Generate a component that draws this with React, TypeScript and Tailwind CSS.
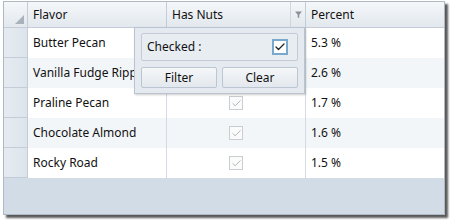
import { Check } from 'lucide-react'

const ROWS = [
  { flavor: 'Butter Pecan', percent: '5.3 %' },
  { flavor: 'Vanilla Fudge Ripple', percent: '2.6 %' },
  { flavor: 'Praline Pecan', percent: '1.7 %' },
  { flavor: 'Chocolate Almond', percent: '1.6 %' },
  { flavor: 'Rocky Road', percent: '1.5 %' },
]

function DisabledCheck() {
  return (
    <div className="w-[14px] h-[14px] border border-[#c8cdd2] bg-[#fbfbfb] flex items-center justify-center">
      <Check size={11} strokeWidth={2} className="text-[#a8acb0]" />
    </div>
  )
}

function FilterPopup() {
  return (
    <div className="absolute left-[130px] top-[25px] w-[171px] h-[67px] bg-[#e4eaf0] border border-[#b9c4cf] shadow-[1px_1px_2px_rgba(0,0,0,0.2)] px-[6px] pt-[5px] flex flex-col gap-[6px]">
      <div className="h-[28px] rounded-[2px] border border-[#c3ccd6] bg-[#e8edf2] flex items-center justify-between pl-[5px] pr-[9px]">
        <span>Checked :</span>
        <div className="w-[16px] h-[16px] border-2 border-[#7aa7cc] bg-white flex items-center justify-center">
          <Check size={12} strokeWidth={2.5} className="text-[#222]" />
        </div>
      </div>
      <div className="flex gap-[5px]">
        <button className="flex-1 h-[21px] rounded-[2px] border border-[#bcc6d0] bg-gradient-to-b from-[#f5f7f9] to-[#e3e8ee] leading-none">
          Filter
        </button>
        <button className="flex-1 h-[21px] rounded-[2px] border border-[#bcc6d0] bg-gradient-to-b from-[#f5f7f9] to-[#e3e8ee] leading-none">
          Clear
        </button>
      </div>
    </div>
  )
}

export default function App() {
  return (
    <div className="w-[453px] h-[222px] bg-white pl-[3px] pt-[1px] font-['Noto_Sans',sans-serif] text-[12px] text-[#111]">
      <div className="relative w-[442px] h-[214px] border border-[#aeb9c5] bg-[#d2dce6] shadow-[3px_3px_2px_rgba(0,0,0,0.65)] flex flex-col overflow-hidden">
        <div className="flex h-[26px] bg-gradient-to-b from-[#f5f7f9] to-[#e2e8ee] border-b border-[#c4cdd7]">
          <div className="w-[24px] relative border-r border-[#c4cdd7]">
            <div className="absolute right-[3px] bottom-[3px] w-0 h-0 border-l-[9px] border-l-transparent border-b-[9px] border-b-[#a9b1ba]" />
          </div>
          <div className="w-[139px] border-r border-[#c4cdd7] flex items-center pl-[5px]">Flavor</div>
          <div className="w-[139px] border-r border-[#c4cdd7] flex items-center pl-[5px]">
            <span className="flex-1">Has Nuts</span>
            <div className="w-[15px] h-full border-l border-[#d0d7df] flex items-center justify-center">
              <svg width="7" height="7" viewBox="0 0 7 7">
                <path d="M0 0.5H7L4.3 3.8V6.8H2.7V3.8Z" fill="#8a939c" />
              </svg>
            </div>
          </div>
          <div className="flex-1 flex items-center pl-[5px]">Percent</div>
        </div>
        {ROWS.map((row, i) => (
          <div key={row.flavor} className={`flex h-[30px] ${i % 2 ? 'bg-[#f3f6f9]' : 'bg-white'}`}>
            <div className="w-[24px] bg-gradient-to-r from-[#e6ebf1] to-[#dde4ec] border-r border-b border-[#c4cdd7]" />
            <div className="w-[139px] border-r border-[#d3dae2] flex items-center pl-[5px] whitespace-nowrap overflow-hidden">
              {row.flavor}
            </div>
            <div className="w-[139px] border-r border-[#d3dae2] flex items-center justify-center">
              <DisabledCheck />
            </div>
            <div className="flex-1 flex items-center pl-[5px]">{row.percent}</div>
          </div>
        ))}
        <div className="flex-1" />
        <FilterPopup />
      </div>
    </div>
  )
}
